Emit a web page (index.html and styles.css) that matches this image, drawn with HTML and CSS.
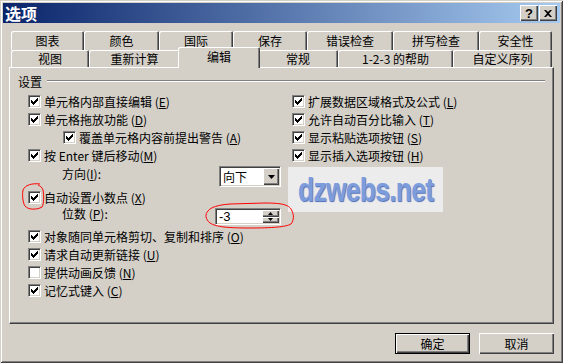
FILE: index.html
```html
<!DOCTYPE html>
<html lang="zh-CN">
<head>
  <meta charset="UTF-8">
  <title>选项</title>
  <link rel="stylesheet" href="styles.css">
</head>
<body>
  <div class="dialog">
    <div class="titlebar">
      <span class="title">选项</span>
      <span class="cap-btn help">?</span>
      <span class="cap-btn close">
        <svg width="8" height="7" viewBox="0 0 8 7"><path d="M0 0h2l2 2 2-2h2L5 3.5 8 7H6L4 5 2 7H0l3-3.5z" fill="#000"/></svg>
      </span>
    </div>

    <div class="main">
      <div class="tabs-back">
        <div class="tab">图表</div>
        <div class="tab">颜色</div>
        <div class="tab">国际</div>
        <div class="tab">保存</div>
        <div class="tab">错误检查</div>
        <div class="tab">拼写检查</div>
        <div class="tab">安全性</div>
      </div>
      <div class="tabs-front">
        <div class="tab">视图</div>
        <div class="tab">重新计算</div>
        <div class="tab active">编辑</div>
        <div class="tab">常规</div>
        <div class="tab">1-2-3 的帮助</div>
        <div class="tab">自定义序列</div>
      </div>

      <div class="panel">
        <div class="group-head"><span>设置</span><span class="etch"></span></div>
        <div class="cols">
          <div class="col">
            <div class="row"><span class="cb on"></span>单元格内部直接编辑 (<u>E</u>)</div>
            <div class="row"><span class="cb on"></span>单元格拖放功能 (<u>D</u>)</div>
            <div class="row sub"><span class="cb on"></span>覆盖单元格内容前提出警告 (<u>A</u>)</div>
            <div class="row"><span class="cb on"></span>按 Enter 键后移动(<u>M</u>)</div>
            <div class="row field dir">
              <span class="lbl">方向(<u>I</u>):</span>
              <span class="select"><span class="val">向下</span><span class="drop"><svg width="7" height="4" viewBox="0 0 7 4"><path d="M0 0h7L3.5 4z" fill="#000"/></svg></span></span>
            </div>
            <div class="row"><span class="cb on"></span>自动设置小数点 (<u>X</u>)</div>
            <div class="row field places">
              <span class="lbl">位数 (<u>P</u>):</span>
              <span class="spin"><span class="val">-3</span><span class="arrows"><span class="sb"><svg width="5" height="3" viewBox="0 0 5 3"><path d="M2.5 0L5 3H0z" fill="#000"/></svg></span><span class="sb"><svg width="5" height="3" viewBox="0 0 5 3"><path d="M0 0h5L2.5 3z" fill="#000"/></svg></span></span></span>
            </div>
            <div class="row"><span class="cb on"></span>对象随同单元格剪切、复制和排序 (<u>O</u>)</div>
            <div class="row"><span class="cb on"></span>请求自动更新链接 (<u>U</u>)</div>
            <div class="row"><span class="cb"></span>提供动画反馈 (<u>N</u>)</div>
            <div class="row"><span class="cb on"></span>记忆式键入 (<u>C</u>)</div>
          </div>
          <div class="col">
            <div class="row"><span class="cb on"></span>扩展数据区域格式及公式 (<u>L</u>)</div>
            <div class="row"><span class="cb on"></span>允许自动百分比输入 (<u>T</u>)</div>
            <div class="row"><span class="cb on"></span>显示粘贴选项按钮 (<u>S</u>)</div>
            <div class="row"><span class="cb on"></span>显示插入选项按钮 (<u>H</u>)</div>
          </div>
        </div>
      </div>

      <div class="actions">
        <span class="btn default">确定</span>
        <span class="btn">取消</span>
      </div>
    </div>

    <div class="watermark"><span>dzwebs.net</span></div>

    <svg class="marks" width="563" height="363" viewBox="0 0 563 363">
      <path d="M40 184 C32 183 25 185 23 190 C22 196 23 203 25 206 C28 210 37 210 42 207 C44 204 44 195 43 190 C42 187 40 186 38 185" fill="none" stroke="#f00" stroke-width="1"/>
      <path d="M292 211 C290 205 283 203 265 203 L230 204 C218 205 211 207 208 211 C205 214 205 219 210 223 C216 227 228 228 250 228 C272 228 286 227 291 224 C294 220 294 215 292 211" fill="none" stroke="#f00" stroke-width="1"/>
    </svg>
  </div>
</body>
</html>
```

FILE: styles.css
```css
* { box-sizing: border-box; }
body { margin: 0; background: #d4d0c8; }
.dialog { position: relative; width: 563px; height: 363px; padding: 3px; background: #d4d0c8; font: 12px "Noto Sans CJK SC", "Liberation Sans", sans-serif; color: #000; box-shadow: inset 1px 1px #d4d0c8, inset -1px -1px #404040, inset 2px 2px #fff, inset -2px -2px #808080; }

.titlebar { height: 20px; display: flex; align-items: center; padding: 0 3px 0 2px; background: linear-gradient(to right, #0a246a, #a6caf0); }
.title { flex: 1; color: #fff; font-weight: bold; font-size: 16px; line-height: 20px; }
.cap-btn { width: 18px; height: 16px; display: flex; align-items: center; justify-content: center; background: #d4d0c8; font: bold 13px "Liberation Sans", sans-serif; box-shadow: inset 1px 1px #fff, inset -1px -1px #404040, inset -2px -2px #808080; }
.cap-btn.help { margin-right: 1px; }

.main { padding: 8px 6px 0; }
.tabs-back, .tabs-front { display: grid; margin: 0 2px; }
.tabs-back { grid-template-columns: 73px 75px 74px 74px 86px 86px 73px; height: 19px; }
.tabs-front { grid-template-columns: 78px 91px 78px 80px 115px 99px; height: 17px; align-items: start; }
.tab { height: 19px; display: flex; align-items: center; justify-content: center; background: #d4d0c8; border-radius: 2px 2px 0 0; box-shadow: inset 1px 1px #fff, inset -1px 0 #404040, inset -2px 0 #808080; padding-bottom: 1px; }
.tabs-front .tab { height: 17px; padding-bottom: 0; }
.tabs-front .tab.active { position: relative; z-index: 1; height: 21px; margin: -3px -2px 0; padding-bottom: 3px; box-shadow: inset 1px 1px #fff, inset -1px 0 #404040, inset -2px 0 #808080; }

.panel { height: 257px; padding: 4px 1px 0; border: 1px solid; border-color: #fff #404040 #404040 #fff; box-shadow: inset -1px -1px #808080; }
.group-head { display: flex; align-items: center; height: 18px; padding-left: 7px; }
.etch { flex: 1; margin: 0 7px 0 5px; border-top: 1px solid #808080; border-bottom: 1px solid #fff; }

.cols { display: grid; grid-template-columns: 264px 1fr; margin-top: 2px; padding-left: 17px; }
.row { display: flex; align-items: center; height: 18px; white-space: nowrap; }
.row.sub { padding-left: 35px; }
u { text-decoration: underline; text-underline-offset: 1px; }

.cb { width: 13px; height: 13px; margin-right: 3px; flex: none; border: 1px solid; border-color: #808080 #fff #fff #808080; box-shadow: inset 1px 1px #404040, inset -1px -1px #d4d0c8; background: #fff; }
.cb.on { background: #fff url("data:image/svg+xml,%3Csvg xmlns='http://www.w3.org/2000/svg' width='7' height='7'%3E%3Cpath d='M6 0h1v1h-1zM5 1h2v1h-2zM0 2h1v1h-1zM4 2h3v1h-3zM0 3h2v1h-2zM3 3h3v1h-3zM0 4h5v1h-5zM1 5h3v1h-3zM2 6h1v1h-1z'/%3E%3C/svg%3E") no-repeat 2px 2px; }

.field { align-items: flex-start; padding-left: 34px; }
.field .lbl { line-height: 16px; }
.dir { height: 24px; }
.dir .lbl { width: 157px; padding-top: 2px; }
.places { height: 21px; }
.places .lbl { width: 153px; padding-top: 0; }

.select, .spin { display: flex; background: #fff; border: 1px solid; border-color: #808080 #fff #fff #808080; box-shadow: inset 1px 1px #404040, inset -1px -1px #d4d0c8; }
.select { width: 62px; height: 21px; margin-top: 2px; padding: 1px; }
.spin { width: 66px; height: 17px; margin-top: 2px; padding: 1px; }
.val { flex: 1; padding-left: 2px; line-height: 17px; }
.spin .val { line-height: 13px; font-family: "Liberation Sans", sans-serif; font-size: 13px; }
.drop, .sb { display: flex; align-items: center; justify-content: center; background: #d4d0c8; box-shadow: inset 1px 1px #fff, inset -1px -1px #404040, inset -2px -2px #808080; }
.drop { width: 16px; height: 17px; }
.arrows { width: 17px; display: flex; flex-direction: column; }
.sb { flex: 1; }

.actions { display: flex; justify-content: flex-end; gap: 9px; margin-top: 9px; }
.btn { width: 75px; height: 21px; display: flex; align-items: center; justify-content: center; background: #d4d0c8; box-shadow: inset 1px 1px #fff, inset -1px -1px #404040, inset -2px -2px #808080; }
.btn.default { border: 1px solid #000; box-shadow: inset 1px 1px #fff, inset -1px -1px #404040, inset -2px -2px #808080; }

.watermark { position: absolute; left: 288px; top: 167px; width: 155px; height: 45px; background: #ececec; display: flex; align-items: center; justify-content: center; }
.watermark span { font: bold 34px "Liberation Sans", sans-serif; color: #7c9cdc; letter-spacing: -1px; transform: scaleX(0.78); text-shadow: 1px 1px 1px #4e6fb8; }
.marks { position: absolute; left: 0; top: 0; pointer-events: none; }
```
